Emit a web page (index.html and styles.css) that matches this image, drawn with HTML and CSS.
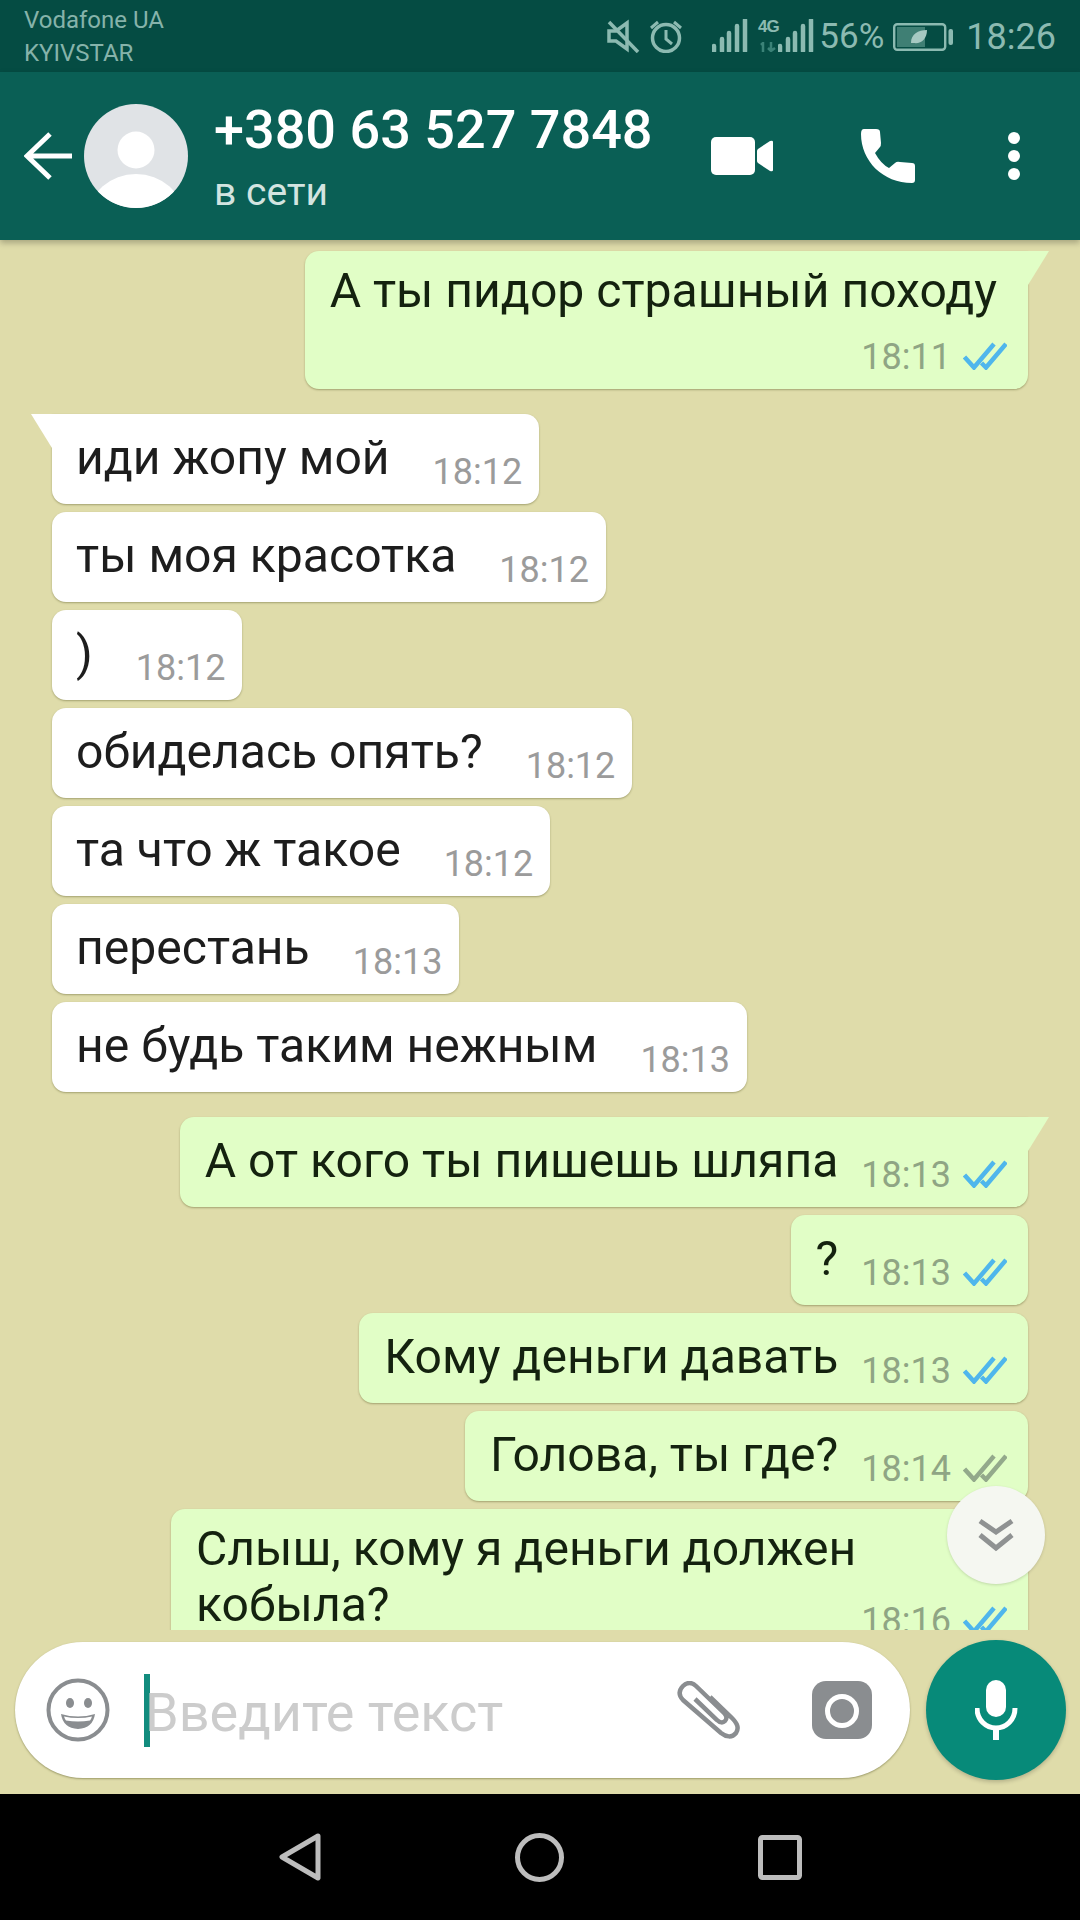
FILE: index.html
```html
<!DOCTYPE html>
<html lang="ru">
<head>
<meta charset="utf-8">
<title>WhatsApp</title>
<link rel="stylesheet" href="styles.css">
</head>
<body>
<svg class="defs" width="0" height="0" aria-hidden="true">
  <symbol id="ticks" viewBox="0 0 44 28">
    <path d="M1.500 15l9.500 10.500L31 2M18.500 21l4.500 4.500L43 2" fill="none" stroke-width="4.500"/>
  </symbol>
</svg>
<div class="app">
  <div class="status">
    <div class="carriers"><span>Vodafone UA</span><span>KYIVSTAR</span></div>
    <div class="status-icons">
      <svg class="st-mute" width="34" height="34" viewBox="0 0 34 34"><path d="M3 12v10h7l11 8V4L10 12z" fill="none" stroke="#8cbab1" stroke-width="3.500"/><path d="M3 3l29 30" stroke="#8cbab1" stroke-width="3.500"/></svg>
      <svg class="st-alarm" width="36" height="34" viewBox="0 0 36 34"><circle cx="18" cy="19" r="13.500" fill="none" stroke="#8cbab1" stroke-width="3.500"/><path d="M18 11v9l6 5M3 9l7-6M33 9l-7-6" fill="none" stroke="#8cbab1" stroke-width="3"/></svg>
      <svg class="st-sig1" width="36" height="33" viewBox="0 0 36 33"><path d="M2 27v5M10 20v12M17 14v18M25 7v25M33 1v31" stroke="#8cbab1" stroke-width="4.500" stroke-linecap="round"/></svg>
      <div class="net"><span class="net-label">4G</span><svg width="17" height="10" viewBox="0 0 17 10"><path d="M3 10V1L1 3M11 0v9M8 6l3 3 4-3" fill="none" stroke="#3b8277" stroke-width="2.500"/></svg></div>
      <svg class="st-sig2" width="36" height="33" viewBox="0 0 36 33"><path d="M2 27v5M10 20v12M17 14v18M25 7v25M33 1v31" stroke="#8cbab1" stroke-width="4.500" stroke-linecap="round"/></svg>
      <span class="st-pct">56%</span>
      <svg class="st-batt" width="60" height="28" viewBox="0 0 60 28"><rect x="1.200" y="1.200" width="51" height="25.500" rx="3" fill="none" stroke="#8cbab1" stroke-width="2.400"/><rect x="4" y="4" width="28" height="20" fill="#3f7f74"/><path d="M18 20c0-9 7-13 16-13 0 9-6 14-13 13z" fill="#a6c9c2"/><rect x="55.500" y="6" width="4.500" height="16" rx="2" fill="#8cbab1"/></svg>
      <span class="st-time">18:26</span>
    </div>
  </div>

  <header class="topbar">
    <svg class="back" width="48" height="50" viewBox="0 0 48 50"><path d="M48 25H4M26 3L3 25l23 22" fill="none" stroke="#fff" stroke-width="5"/></svg>
    <svg class="avatar" width="104" height="104" viewBox="0 0 104 104"><defs><clipPath id="av"><circle cx="52" cy="52" r="52"/></clipPath></defs><circle cx="52" cy="52" r="52" fill="#e0e3e6"/><circle cx="52" cy="46" r="18.500" fill="#fff"/><ellipse cx="52" cy="112" rx="47" ry="42" fill="#fff" clip-path="url(#av)"/></svg>
    <div class="title">
      <div class="name">+380 63 527 7848</div>
      <div class="presence">в сети</div>
    </div>
    <div class="actions">
      <svg width="62" height="38" viewBox="0 0 62 38"><rect width="44" height="38" rx="5" fill="#fff"/><path d="M47 12l12-8q3-1 3 1v28q0 2-3 1l-12-8q-1-1-1-2v-10q0-1 1-2z" fill="#fff"/></svg>
      <svg width="54" height="54" viewBox="0 0 54 54"><path d="M3 0h12q4 0 4 3l1 11q0 3-1 4l-5 6q6 11 14 15l6-5q2-2 5-1l12 1q3 0 3 3v14q0 3-3 3C22 54 0 32 0 5q0-5 3-5z" fill="#fff"/></svg>
      <svg class="dots" width="12" height="48" viewBox="0 0 12 48"><circle cx="6" cy="6" r="6" fill="#fff"/><circle cx="6" cy="24" r="6" fill="#fff"/><circle cx="6" cy="42" r="6" fill="#fff"/></svg>
    </div>
  </header>

  <main class="chat">
    <div class="msg out tail stacked">
      <div class="text">А ты пидор страшный походу</div>
      <div class="meta"><span class="time">18:11</span><svg class="tick read"><use href="#ticks"/></svg></div>
    </div>

    <div class="msg in tail group"><div class="text">иди жопу мой</div><div class="meta"><span class="time">18:12</span></div></div>
    <div class="msg in"><div class="text">ты моя красотка</div><div class="meta"><span class="time">18:12</span></div></div>
    <div class="msg in"><div class="text">)</div><div class="meta"><span class="time">18:12</span></div></div>
    <div class="msg in"><div class="text">обиделась опять?</div><div class="meta"><span class="time">18:12</span></div></div>
    <div class="msg in"><div class="text">та что ж такое</div><div class="meta"><span class="time">18:12</span></div></div>
    <div class="msg in"><div class="text">перестань</div><div class="meta"><span class="time">18:13</span></div></div>
    <div class="msg in"><div class="text">не будь таким нежным</div><div class="meta"><span class="time">18:13</span></div></div>

    <div class="msg out tail group2"><div class="text">А от кого ты пишешь шляпа</div><div class="meta"><span class="time">18:13</span><svg class="tick read"><use href="#ticks"/></svg></div></div>
    <div class="msg out"><div class="text">?</div><div class="meta"><span class="time">18:13</span><svg class="tick read"><use href="#ticks"/></svg></div></div>
    <div class="msg out"><div class="text">Кому деньги давать</div><div class="meta"><span class="time">18:13</span><svg class="tick read"><use href="#ticks"/></svg></div></div>
    <div class="msg out"><div class="text">Голова, ты где?</div><div class="meta"><span class="time">18:14</span><svg class="tick sent"><use href="#ticks"/></svg></div></div>
    <div class="msg out last">
      <div class="text">Слыш, кому я деньги должен<br>кобыла?</div>
      <div class="meta"><span class="time">18:16</span><svg class="tick read"><use href="#ticks"/></svg></div>
    </div>

    <button class="scroll-down" type="button" aria-label="Вниз">
      <svg width="36" height="34" viewBox="0 0 36 34"><path d="M2 3l16 11L34 3M2 17l16 13 16-13" fill="none" stroke="#8f9292" stroke-width="5"/></svg>
    </button>
  </main>

  <div class="composer">
    <div class="input">
      <svg class="emoji" width="64" height="64" viewBox="0 0 64 64"><circle cx="32" cy="32" r="29.500" fill="none" stroke="#8a8d90" stroke-width="4"/><ellipse cx="24" cy="25" rx="4" ry="5" fill="#8a8d90"/><ellipse cx="42" cy="25" rx="4" ry="5" fill="#8a8d90"/><path d="M15 36q17 5 34 0q-2 14-17 15q-15-1-17-15z" fill="#8a8d90"/><path d="M18 38.500q14 3 28 0q-1 3-2 4q-12 2-24 0q-1-1-2-4z" fill="#fff"/></svg>
      <span class="caret"></span>
      <span class="placeholder">Введите текст</span>
      <svg class="clip" width="64" height="58" viewBox="0 0 64 58"><path d="M33 16l21 20c5 5 9 10 5 16-4 5-10 4-15 0L6 19C1 14 2 9 6 5c4-4 9-4 13 0l28 27c3 3 3 6 1 8s-5 2-8-1L18 18" fill="none" stroke="#8a8d90" stroke-width="4.500"/></svg>
      <svg class="camera" width="60" height="58" viewBox="0 0 60 58"><rect width="60" height="58" rx="14" fill="#8a8d90"/><circle cx="30" cy="30" r="14.500" fill="none" stroke="#fff" stroke-width="5"/></svg>
    </div>
    <button class="mic" type="button" aria-label="Микрофон">
      <svg width="44" height="60" viewBox="0 0 44 60"><rect x="11" y="0" width="20" height="37" rx="10" fill="#fff"/><path d="M2 28c0 12 9 20 19 20s19-8 19-20" fill="none" stroke="#fff" stroke-width="5"/><path d="M21 46v14" stroke="#fff" stroke-width="6"/></svg>
    </button>
  </div>

  <nav class="navbar">
    <svg width="42" height="48" viewBox="0 0 42 48"><path d="M39 3L3 24l36 21z" fill="none" stroke="#bdbdbd" stroke-width="5" stroke-linejoin="round"/></svg>
    <svg width="49" height="49" viewBox="0 0 49 49"><circle cx="24.500" cy="24.500" r="22" fill="none" stroke="#bdbdbd" stroke-width="5"/></svg>
    <svg width="44" height="45" viewBox="0 0 44 45"><rect x="2.500" y="2.500" width="39" height="40" rx="2" fill="none" stroke="#bdbdbd" stroke-width="5"/></svg>
  </nav>
</div>
</body>
</html>
```

FILE: styles.css
```css
* { box-sizing: border-box; }
html, body { margin: 0; padding: 0; }
body { width: 1080px; height: 1920px; overflow: hidden; font-family: Roboto, "Noto Sans", sans-serif; background: #000; }
.defs { position: absolute; }
.app { display: flex; flex-direction: column; width: 1080px; height: 1920px; background: #dfdcaa; }

.status { flex: 0 0 72px; display: flex; justify-content: space-between; background: #054c43; color: #8cbab1; padding: 0 24px 0 24px; }
.carriers { display: flex; flex-direction: column; font-size: 24px; line-height: 33px; padding-top: 4px; color: #86b3aa; }
.status-icons { display: flex; align-items: flex-start; padding-top: 19px; }
.st-alarm { margin-left: 8px; }
.st-sig1 { margin-left: 28px; }
.net { display: flex; flex-direction: column; align-items: center; width: 18px; margin-left: 11px; }
.net-label { font-size: 17px; line-height: 15px; font-weight: 700; font-family: "Liberation Sans", sans-serif; letter-spacing: -1px; color: #8cbab1; margin-bottom: 8px; }
.st-sig2 { margin-left: 1px; }
.st-pct { font-size: 35px; line-height: 36px; margin-left: 5px; }
.st-batt { margin-left: 9px; margin-top: 4px; }
.st-time { font-size: 36px; line-height: 36px; margin-left: 13px; }

.topbar { flex: 0 0 168px; position: relative; z-index: 2; display: flex; align-items: center; background: #0a5f55; box-shadow: 0 3px 6px rgba(0,0,0,.25); padding: 0 60px 0 24px; color: #fff; }
.avatar { margin-left: 12px; }
.title { margin-left: 26px; display: flex; flex-direction: column; }
.name { font-size: 54px; line-height: 62px; font-weight: 500; }
.presence { font-size: 39px; line-height: 44px; color: #d3e4e0; margin-top: 9px; }
.actions { margin-left: auto; display: flex; align-items: center; gap: 88px; }
.dots { margin-left: 5px; }

.chat { flex: 0 0 1390px; position: relative; overflow: hidden; display: flex; flex-direction: column; gap: 8px; padding: 11px 52px 0; }
.msg { position: relative; flex: none; display: flex; align-items: flex-end; padding: 0 17px 12px 24px; border-radius: 14px; box-shadow: 0 1px 2px rgba(90,90,40,.45); }
.text { font-size: 48.100px; line-height: 55px; padding: 16px 0 7px; white-space: nowrap; }
.meta { display: flex; align-items: center; height: 40px; }
.time { font-size: 36px; line-height: 40px; }
.tick { width: 44px; height: 28px; margin-left: 12px; margin-bottom: 2px; }
.tick.read { stroke: #4fb6ec; }
.tick.sent { stroke: #93a98b; }

.in { align-self: flex-start; background: #fff; color: #1d1d1d; }
.in .meta { margin-left: 43px; color: #9b9b9b; }
.out { align-self: flex-end; background: #e1fec6; color: #14220f; padding-left: 25px; padding-right: 21px; }
.out .meta { margin-left: 23px; color: #8fa584; }

.in.tail { border-top-left-radius: 0; }
.out.tail { border-top-right-radius: 0; }
.tail::before { content: ""; position: absolute; top: 0; width: 21px; height: 34px; }
.in.tail::before { left: -21px; background: #fff; clip-path: polygon(0 0, 100% 0, 100% 100%); }
.out.tail::before { right: -21px; background: #e1fec6; clip-path: polygon(0 0, 100% 0, 0 100%); }

.group { margin-top: 17px; }
.group2 { margin-top: 17px; }
.stacked { display: block; padding-bottom: 12px; }
.stacked .text { padding: 12px 10px 19px 0; }
.stacked .meta { justify-content: flex-end; margin-left: 0; }
.last { display: block; width: 857px; height: 180px; }
.last .text { padding-top: 12px; line-height: 56px; }
.last .meta { position: absolute; right: 21px; top: 92px; margin-left: 0; }

.scroll-down { position: absolute; right: 35px; top: 1246px; width: 98px; height: 98px; border: 0; padding: 0; border-radius: 50%; background: #f5f7f1; box-shadow: 0 1px 3px rgba(0,0,0,.15); display: flex; align-items: center; justify-content: center; }

.composer { flex: 0 0 164px; display: flex; align-items: flex-start; padding: 10px 14px 0 15px; gap: 16px; }
.input { width: 895px; height: 136px; margin-top: 2px; background: #fff; border-radius: 68px; box-shadow: 0 1px 2px rgba(90,90,40,.5); display: flex; align-items: center; padding-left: 31px; }
.caret { width: 6px; height: 73px; background: #128c7e; margin-left: 34px; flex: none; }
.placeholder { font-size: 54px; line-height: 60px; color: #cccccc; margin-left: -5px; padding-top: 6px; white-space: nowrap; }
.clip { margin-left: auto; }
.camera { margin-left: 71px; margin-right: 38px; }
.mic { width: 140px; height: 140px; border: 0; padding: 0 0 0 2px; border-radius: 50%; background: #078a79; box-shadow: 0 2px 4px rgba(0,0,0,.2); display: flex; align-items: center; justify-content: center; flex: none; }

.navbar { flex: 0 0 126px; background: #000; display: flex; justify-content: center; align-items: center; gap: 194px; }
```
